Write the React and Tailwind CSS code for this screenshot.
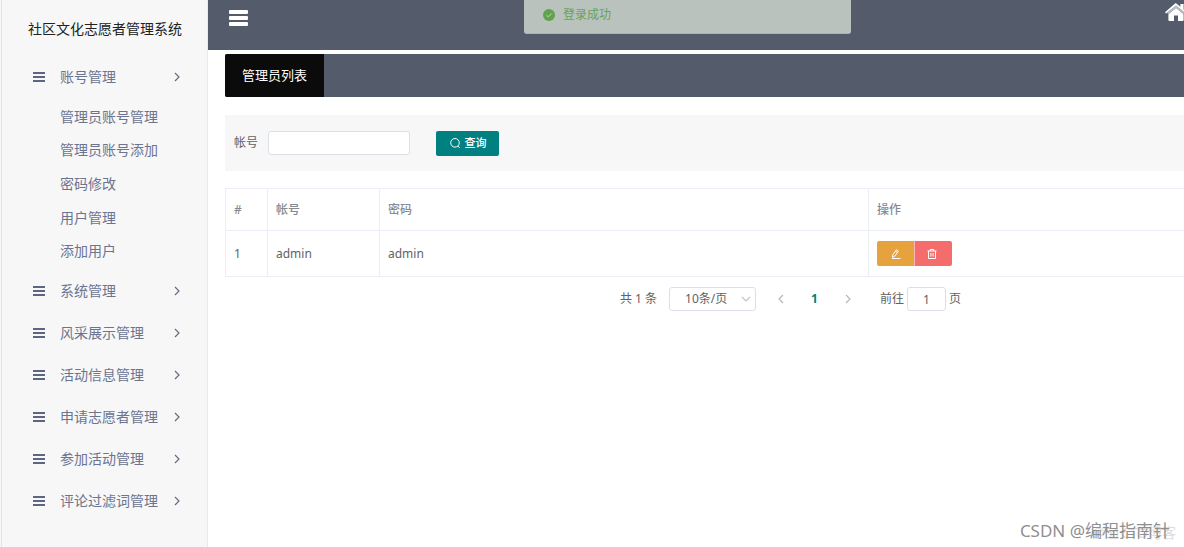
import React, { useState } from 'react';

const submenu = ['管理员账号管理', '管理员账号添加', '密码修改', '用户管理', '添加用户'];

const menus = [
  { title: '账号管理', children: submenu },
  { title: '系统管理' },
  { title: '风采展示管理' },
  { title: '活动信息管理' },
  { title: '申请志愿者管理' },
  { title: '参加活动管理' },
  { title: '评论过滤词管理' },
];

const admins = [{ id: 1, username: 'admin', password: 'admin' }];

function Chevron({ className, d = 'M4 2 L8 6 L4 10' }) {
  return (
    <svg viewBox="0 0 12 12" fill="none" stroke="currentColor" strokeWidth="1.2" className={className} aria-hidden="true">
      <path d={d} />
    </svg>
  );
}

function Sidebar() {
  return (
    <aside className="w-[208px] shrink-0 bg-[#f7f7f7] border-r border-[#eaeaee]">
      <div className="min-h-screen ml-px border-l border-[#e4e4e6]">
        <h1 className="h-14 pt-px pl-[26px] flex items-center text-sm text-[#222]">社区文化志愿者管理系统</h1>
        <nav>
          {menus.map((menu) => (
            <div key={menu.title}>
              <button type="button" className="w-full h-[42px] pl-[31px] pr-6 flex items-center text-sm text-[#6b7490]">
                <svg viewBox="0 0 12 12" className="w-3 h-3 mr-[15px]" fill="#5d6580" aria-hidden="true">
                  <path d="M0 1h12v2H0zM0 5h12v2H0zM0 9h12v2H0z" />
                </svg>
                <span>{menu.title}</span>
                <Chevron className="w-3 h-3 ml-auto text-[#666c7c]" />
              </button>
              {menu.children && (
                <ul className="h-[172px] py-0.5 grid grid-rows-5">
                  {menu.children.map((name) => (
                    <li key={name} className="pl-[58px] flex items-center text-sm text-[#6b7490]">
                      <a href="#">{name}</a>
                    </li>
                  ))}
                </ul>
              )}
            </div>
          ))}
        </nav>
      </div>
    </aside>
  );
}

function SearchForm() {
  const [account, setAccount] = useState('');

  return (
    <form className="mt-[18px] h-14 px-[9px] flex items-center bg-[#f7f7f7]" onSubmit={(e) => e.preventDefault()}>
      <label htmlFor="account" className="text-xs text-[#606266]">帐号</label>
      <input
        id="account"
        value={account}
        onChange={(e) => setAccount(e.target.value)}
        className="ml-[10px] w-[142px] h-6 px-2 rounded-[3px] border border-[#dcdfe6] bg-white text-xs"
      />
      <button type="submit" className="ml-[26px] w-[63px] h-[25px] flex items-center justify-center gap-1 rounded-xs bg-[#008080] text-[11px] font-medium text-white">
        <svg viewBox="0 0 12 12" className="w-3 h-3" fill="none" stroke="currentColor" aria-hidden="true">
          <circle cx="6" cy="5.8" r="4.3" />
          <path d="M8.8 9 L10.6 10.8" />
        </svg>
        查询
      </button>
    </form>
  );
}

function AdminTable() {
  return (
    <table className="mt-[17px] w-full table-fixed border-collapse text-left text-xs text-[#606266]">
      <colgroup>
        <col className="w-[42px]" />
        <col className="w-[112px]" />
        <col className="w-[489px]" />
        <col />
      </colgroup>
      <thead>
        <tr className="h-[42px] text-[#868a92]">
          {['#', '帐号', '密码', '操作'].map((name) => (
            <th key={name} className="pl-2 border border-[#ebeef5] font-medium">{name}</th>
          ))}
        </tr>
      </thead>
      <tbody>
        {admins.map((row) => (
          <tr key={row.id} className="h-[46px]">
            <td className="pl-2 border border-[#ebeef5]">{row.id}</td>
            <td className="pl-2 border border-[#ebeef5]">{row.username}</td>
            <td className="pl-2 border border-[#ebeef5]">{row.password}</td>
            <td className="pl-2 border border-[#ebeef5]">
              <div className="flex text-white">
                <button type="button" aria-label="编辑" className="w-[37px] h-[25px] flex items-center justify-center rounded-l-xs bg-[#e6a23c]">
                  <svg viewBox="0 0 12 12" className="w-3 h-3" fill="none" stroke="currentColor" aria-hidden="true">
                    <path d="M2.4 9.4 L2.8 6.8 L6.4 1.8 L8.4 3.2 L4.8 8.2 Z M5.4 3.2 L7.4 4.6 M2 10.5 H10.4" />
                  </svg>
                </button>
                <button type="button" aria-label="删除" className="w-[38px] h-[25px] pr-1 flex items-center justify-center rounded-r-xs border-l border-[#fab6b6] bg-[#f56c6c]">
                  <svg viewBox="0 0 12 12" className="w-3 h-3" fill="none" stroke="currentColor" aria-hidden="true">
                    <path d="M1.5 3 H10.5 M4.2 3 V1.5 H7.8 V3 M2.5 3 V10.5 H9.5 V3 M4.9 5 V8.6 M7.1 5 V8.6" />
                  </svg>
                </button>
              </div>
            </td>
          </tr>
        ))}
      </tbody>
    </table>
  );
}

function Pagination() {
  return (
    <div className="mt-[10px] h-6 flex items-center justify-center text-xs text-[#606266]">
      <span>共 1 条</span>
      <div className="relative ml-3">
        <select aria-label="每页条数" className="block w-[87px] h-6 pl-[15px] appearance-none rounded-[3px] border border-[#dcdfe6] bg-white">
          <option>10条/页</option>
          <option>20条/页</option>
        </select>
        <Chevron className="absolute right-1 top-1.5 w-3 h-3 text-[#c0c4cc] pointer-events-none" d="M2 4 L6 8 L10 4" />
      </div>
      <button type="button" aria-label="上一页" className="ml-[19px] text-[#b4b8c0]">
        <Chevron className="w-3 h-3" d="M8 2 L4 6 L8 10" />
      </button>
      <button type="button" className="w-[55px] font-bold text-[#008080]">1</button>
      <button type="button" aria-label="下一页" className="text-[#b4b8c0]">
        <Chevron className="w-3 h-3" />
      </button>
      <label htmlFor="page" className="ml-[26px]">前往</label>
      <input id="page" defaultValue="1" className="mx-[3px] w-[39px] h-6 rounded-[3px] border border-[#dcdfe6] text-center" />
      <span>页</span>
    </div>
  );
}

export default function App() {
  return (
    <div className="relative min-h-screen flex overflow-hidden bg-white font-['Noto_Sans','Noto_Sans_CJK_SC',sans-serif]">
      <Sidebar />

      <div className="flex-1 min-w-0">
        <header className="h-[50px] pl-[21px] flex justify-between overflow-hidden bg-[#545c6c] text-white">
          <button type="button" aria-label="折叠菜单" className="mt-[10px] w-[19px] h-4">
            <svg viewBox="0 0 19 16" fill="currentColor" aria-hidden="true">
              <rect width="19" height="4" rx="1" />
              <rect y="6" width="19" height="4" rx="1" />
              <rect y="12" width="19" height="4" rx="1" />
            </svg>
          </button>
          <a href="#" aria-label="首页" className="mt-[3px] -mr-[3px]">
            <svg viewBox="0 0 22 18" className="w-[22px] h-[18px]" fill="currentColor" aria-hidden="true">
              <path d="M11 5 L18.6 11.3 V17 Q18.6 18 17.6 18 H13 V12.6 H9 V18 H4.4 Q3.4 18 3.4 17 V11.3 Z" />
              <path d="M11 0.2 L15.4 3.8 V1 H18.6 V6.5 L22 9.3 L21 10.6 L11 2.5 L1 10.6 L0 9.3 L9.8 0.7 Q11 -0.2 11 0.2 Z" />
              <path d="M2 10 L11 2.6 L20 10 L18.6 11 L11 4.9 L3.4 11 Z" opacity="0.6" />
            </svg>
          </a>
        </header>

        {/* The list is wider than the viewport and runs off to the right */}
        <main className="mt-1 ml-[17px] mr-[-172px]">
          <div className="h-[43px] flex rounded-xs bg-[#545c6c]">
            <h2 className="px-[17px] flex items-center rounded-l-xs bg-[#0b0b0b] text-[13px] text-white">管理员列表</h2>
          </div>
          <SearchForm />
          <AdminTable />
          <Pagination />
        </main>
      </div>

      {/* Login message, sliding out at the top */}
      <div role="status" className="absolute top-0 left-[524px] w-[327px] h-[34px] pl-[19px] pb-1 flex items-center gap-2 rounded-b-[3px] border-b border-[#a9b8a8] bg-[#b9c2bd] text-xs text-[#67a455]">
        <svg viewBox="0 0 12 12" className="w-3 h-3" aria-hidden="true">
          <circle cx="6" cy="6" r="6" fill="#5fa34b" />
          <path d="M3.4 6 L5.3 7.9 L8.8 4.4" fill="none" stroke="#c5d3c5" />
        </svg>
        登录成功
      </div>

      {/* Watermarks */}
      <p className="absolute right-2 bottom-1 text-sm text-[#dcdcdc]">@51CTO博客</p>
      <p className="absolute right-[14px] bottom-1 text-[17px] leading-6 text-[#8f8f8f]">CSDN @编程指南针</p>
    </div>
  );
}
